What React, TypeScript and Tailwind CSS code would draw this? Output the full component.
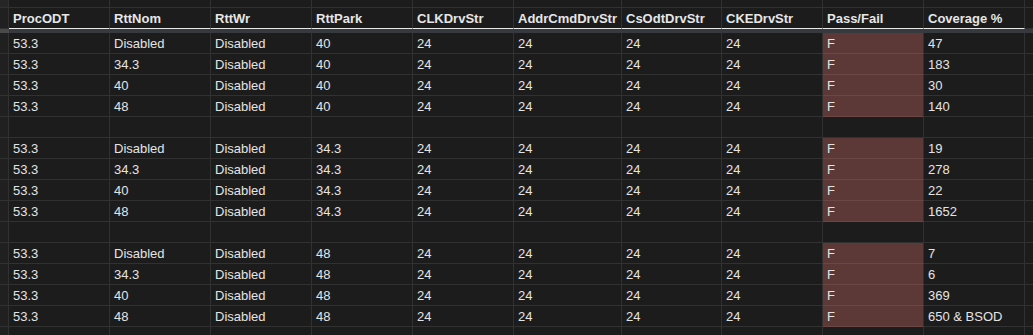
const COLS =
  "grid grid-cols-[9px_101px_101px_101px_101px_101px_108px_100px_101px_101px_101px_1fr]";

const HEADERS = [
  "ProcODT",
  "RttNom",
  "RttWr",
  "RttPark",
  "CLKDrvStr",
  "AddrCmdDrvStr",
  "CsOdtDrvStr",
  "CKEDrvStr",
  "Pass/Fail",
  "Coverage %",
];

type Row = string[] | null;

const groups: { park: string; cov: string[] }[] = [
  { park: "40", cov: ["47", "183", "30", "140"] },
  { park: "34.3", cov: ["19", "278", "22", "1652"] },
  { park: "48", cov: ["7", "6", "369", "650 & BSOD"] },
];

const noms = ["Disabled", "34.3", "40", "48"];

const rows: Row[] = [];
groups.forEach((g, gi) => {
  if (gi > 0) rows.push(null);
  noms.forEach((nom, i) => {
    rows.push(["53.3", nom, "Disabled", g.park, "24", "24", "24", "24", "F", g.cov[i]]);
  });
});

const line = "border-[#313131]";

function DataRow({ row }: { row: Row }) {
  return (
    <div className={`${COLS} h-[21px]`}>
      <div className={`border-r border-b ${line} bg-[#202020]`} />
      {HEADERS.map((_, c) => {
        const val = row ? row[c] : "";
        const fail = row && c === 8;
        return (
          <div
            key={c}
            className={`flex items-center pl-[4px] overflow-hidden whitespace-nowrap border-r border-b ${
              fail ? "bg-[#5c3836] border-b-[#6a4744]" : ""
            } ${line}`}
          >
            {val}
          </div>
        );
      })}
      <div className={`border-b ${line}`} />
    </div>
  );
}

export default function App() {
  return (
    <div className="w-[1033px] h-[335px] overflow-hidden bg-[#1c1c1c] text-[#e4e4e4] text-[13px] leading-none font-['Liberation_Sans',Arial,sans-serif]">
      {/* top strip */}
      <div className={`${COLS} h-[8px]`}>
        <div className={`border-r border-b ${line} bg-[#262626]`} />
        {HEADERS.map((h) => (
          <div key={h} className={`border-r border-b ${line}`} />
        ))}
        <div className={`border-b ${line}`} />
      </div>
      {/* header */}
      <div className={`${COLS} h-[21px]`}>
        <div className={`border-r border-b ${line} bg-[#202020]`} />
        {HEADERS.map((h) => (
          <div
            key={h}
            className={`flex items-center pl-[4px] font-bold text-[#e6e6e6] whitespace-nowrap overflow-hidden border-r ${line} border-b border-b-[#e8e8e8]`}
          >
            {h}
          </div>
        ))}
        <div className={`border-b ${line}`} />
      </div>
      {/* frozen row band */}
      <div className={`${COLS} h-[4px] bg-[#36393d]`}>
        <div className="bg-[#4a4a4a]" />
      </div>
      {rows.map((r, i) => (
        <DataRow key={i} row={r} />
      ))}
      <div className={`${COLS} h-[8px]`}>
        <div className={`border-r ${line} bg-[#202020]`} />
        {HEADERS.map((h) => (
          <div key={h} className={`border-r ${line}`} />
        ))}
      </div>
    </div>
  );
}
